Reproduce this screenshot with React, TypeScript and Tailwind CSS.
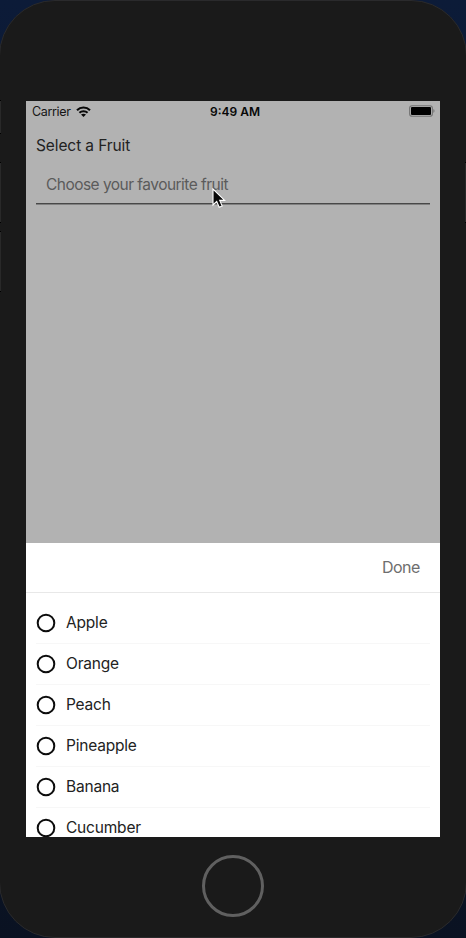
const fruits = ['Apple', 'Orange', 'Peach', 'Pineapple', 'Banana', 'Cucumber'];

function StatusBar() {
  return (
    <div className="flex h-[21px] items-center pl-1.5 pr-[5px] text-[12.5px] leading-5 text-[#151515]">
      <div className="flex flex-1 items-center gap-[5px]">
        <span className="tracking-[-0.35px]">Carrier</span>
        <svg width="15" height="11" viewBox="0 0 15 11" fill="none" stroke="#080808">
          <path d="M1 4.2C4.6 .6 10.4 .6 14 4.2" strokeWidth="2.1" />
          <path d="M3.4 6.8c2.3-2.2 5.9-2.2 8.2 0" strokeWidth="2" />
          <path d="M7.5 10.9 5 8.6c1.3-1.3 3.7-1.3 5 0z" fill="#080808" stroke="none" />
        </svg>
      </div>
      <span className="relative left-[1.5px] text-xs font-semibold text-[#080808]">9:49 AM</span>
      <div className="flex flex-1 justify-end pb-px">
        <svg width="26" height="12" viewBox="0 0 26 12" fill="none">
          <rect x=".6" y=".7" width="22.8" height="10.6" rx="2.6" stroke="#747474" strokeWidth="1.1" />
          <rect x="2" y="2.1" width="20" height="7.8" rx="1" fill="#000" />
          <path d="M24.4 4.1c1.5.6 1.5 3.2 0 3.8z" fill="#747474" />
        </svg>
      </div>
    </div>
  );
}

function Picker() {
  return (
    <div className="h-[294px] shrink-0 overflow-hidden bg-white">
      <div className="flex h-[50px] items-center justify-end border-b border-[#e8e8e8] pb-px pr-5">
        <span className="text-base tracking-[-0.45px] text-[#6e6e6e]">Done</span>
      </div>
      <div className="px-2.5 pt-2.5">
        {fruits.map((fruit) => (
          <div key={fruit} className="flex h-[41px] items-center gap-2.5 border-b border-[#f7f7f7]">
            <svg width="20" height="20" viewBox="0 0 20 20" fill="none">
              <circle cx="10" cy="10" r="8.3" stroke="#0c0c0c" strokeWidth="2" />
            </svg>
            <span className="pb-px text-[15.5px] tracking-[-0.2px] text-[#222]">{fruit}</span>
          </div>
        ))}
      </div>
    </div>
  );
}

export default function App() {
  return (
    <div className="h-[938px] w-[466px] overflow-hidden bg-linear-to-b from-[#0c1b38] to-[#0a1222] font-['Inter','Liberation_Sans',sans-serif]">
      <div className="relative -ml-px flex h-full w-[468px] flex-col items-center rounded-[56px] border border-[#2a2a2c] bg-[#1a1a1a] pt-[100px]">
        <div className="absolute left-0 top-[99px] h-[34px] w-px border-y border-black bg-[#292929]" />
        <div className="absolute left-0 top-[161px] h-[61px] w-px border-y border-black bg-[#292929]" />
        <div className="absolute left-0 top-[230px] h-[61px] w-px border-y border-black bg-[#292929]" />
        <div className="absolute right-0 top-[161px] h-[61px] w-px border-y border-black bg-[#292929]" />
        <main className="flex h-[736px] w-[414px] flex-col overflow-hidden bg-[#b2b2b2]">
          <StatusBar />
          <div className="relative flex-1 px-2.5">
            <div className="pt-3 text-[15.5px] leading-[23px] tracking-[-0.1px] text-[#222]">Select a Fruit</div>
            <div className="mt-2 flex h-[39px] items-center border-b border-[#484848] px-2.5 pt-0.5 text-[15.5px] tracking-[-0.53px] text-[#5b5b5b] shadow-[0_1px_0_#808080]">
              Choose your favourite fruit
            </div>
            <svg className="absolute left-[186px] top-[66px]" width="14" height="21" viewBox="0 0 14 21">
              <path d="M1 1v16l3.7-3.5 2.5 5.8 3-1.3-2.5-5.6h5z" fill="#080808" stroke="#fff" strokeWidth="1.1" />
            </svg>
          </div>
          <Picker />
        </main>
        <div className="mt-[18px] size-[62px] rounded-full border-[3px] border-[#606060]" />
      </div>
    </div>
  );
}
